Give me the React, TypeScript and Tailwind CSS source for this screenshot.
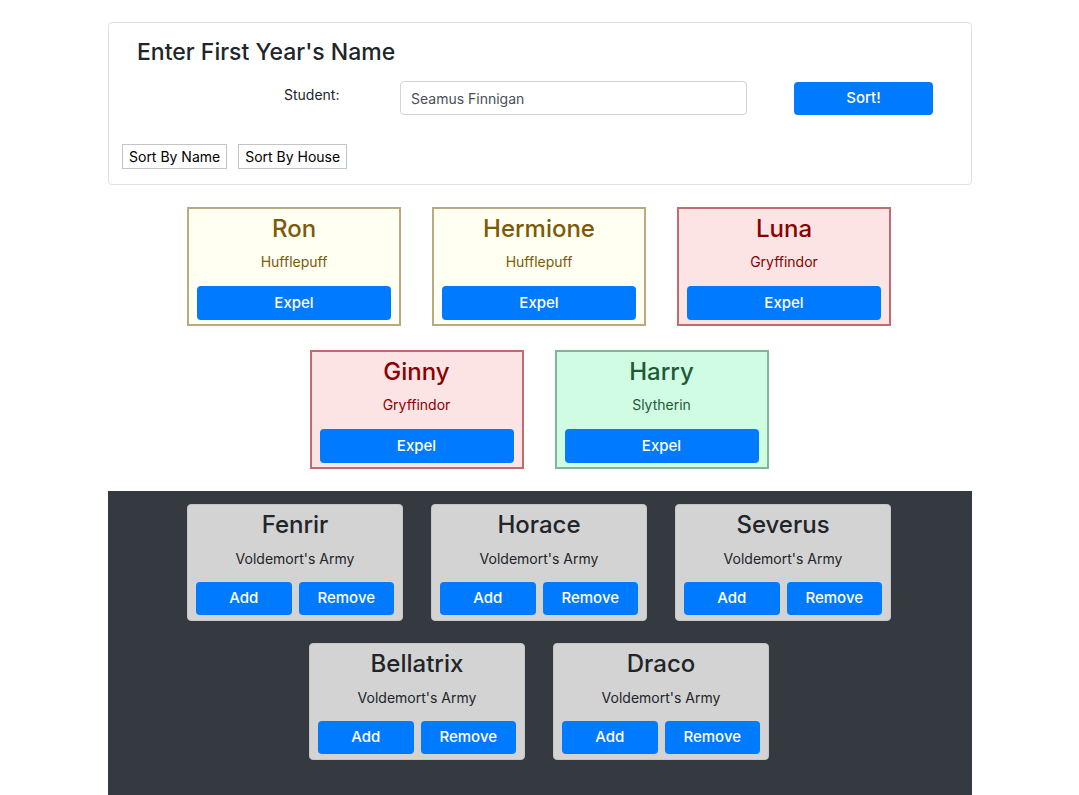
import React from "react";

interface Student {
  name: string;
  house: "Hufflepuff" | "Gryffindor" | "Slytherin";
}

const firstYears: Student[] = [
  { name: "Ron", house: "Hufflepuff" },
  { name: "Hermione", house: "Hufflepuff" },
  { name: "Luna", house: "Gryffindor" },
  { name: "Ginny", house: "Gryffindor" },
  { name: "Harry", house: "Slytherin" },
];

const army = ["Fenrir", "Horace", "Severus", "Bellatrix", "Draco"];

const houseStyles = {
  Hufflepuff: "bg-[#fffff2] border-[#b8ab80] text-[#7c5a08]",
  Gryffindor: "bg-[#fce4e5] border-[#c26a6f] text-[#8b0000]",
  Slytherin: "bg-[#cffce3] border-[#80b698] text-[#1e5a37]",
};

const StudentCard: React.FC<{ student: Student }> = ({ student }) => (
  <div
    className={`w-[214px] h-[119px] border-2 flex flex-col items-center px-[8px] ${houseStyles[student.house]}`}
  >
    <div className="text-[24px] font-medium leading-none mt-[8px]">
      {student.name}
    </div>
    <div className="text-[14px] leading-none mt-[14px]">{student.house}</div>
    <button className="mt-[17px] w-full h-[34px] rounded bg-[#007bff] text-white text-[15px] font-medium">
      Expel
    </button>
  </div>
);

const ArmyCard: React.FC<{ name: string }> = ({ name }) => (
  <div className="w-[216px] h-[117px] rounded bg-[#d3d3d3] border border-[#c6c6c6] flex flex-col items-center px-[8px]">
    <div className="text-[24px] font-medium leading-none mt-[8px] text-[#212529]">
      {name}
    </div>
    <div className="text-[14px] leading-none mt-[15px] text-[#212529]">
      Voldemort's Army
    </div>
    <div className="mt-[16px] w-full flex gap-[7px]">
      <button className="flex-1 h-[33px] rounded bg-[#007bff] text-white text-[15px] font-medium">
        Add
      </button>
      <button className="flex-1 h-[33px] rounded bg-[#007bff] text-white text-[15px] font-medium">
        Remove
      </button>
    </div>
  </div>
);

const App: React.FC = () => {
  return (
    <div className="min-h-[795px] bg-white font-['Inter','Liberation_Sans',sans-serif] text-[#212529]">
      <div className="w-[864px] ml-[108px] pt-[22px]">
        <div className="h-[163px] border border-[#dfe1e5] rounded bg-white px-[13px]">
          <h1 className="text-[23px] font-medium leading-none mt-[18px] ml-[15px]">
            Enter First Year's Name
          </h1>
          <div className="flex items-center mt-[17px]">
            <label className="text-[14px] ml-[162px] w-[116px] -mt-[7px]">
              Student:
            </label>
            <input
              readOnly
              value="Seamus Finnigan"
              className="w-[347px] h-[34px] border border-[#ced4da] rounded px-[10px] text-[14px] text-[#495057] outline-none"
            />
            <button className="ml-[47px] w-[139px] h-[33px] rounded bg-[#007bff] text-white text-[15px] font-medium">
              Sort!
            </button>
          </div>
          <div className="flex gap-[11px] mt-[29px]">
            <button className="h-[25px] px-[6px] border border-[#c4c4c4] text-[14px] text-black">
              Sort By Name
            </button>
            <button className="h-[25px] px-[6px] border border-[#c4c4c4] text-[14px] text-black">
              Sort By House
            </button>
          </div>
        </div>

        <div className="flex flex-wrap justify-center gap-x-[31px] gap-y-[24px] mt-[22px] pl-[59px] pr-[61px]">
          {firstYears.map((s) => (
            <StudentCard key={s.name} student={s} />
          ))}
        </div>

        <div className="mt-[22px] bg-[#343a40] h-[305px] pt-[13px]">
          <div className="flex flex-wrap justify-center gap-x-[28px] gap-y-[22px] pl-[59px] pr-[61px]">
            {army.map((n) => (
              <ArmyCard key={n} name={n} />
            ))}
          </div>
        </div>
      </div>
    </div>
  );
};

export default App;
